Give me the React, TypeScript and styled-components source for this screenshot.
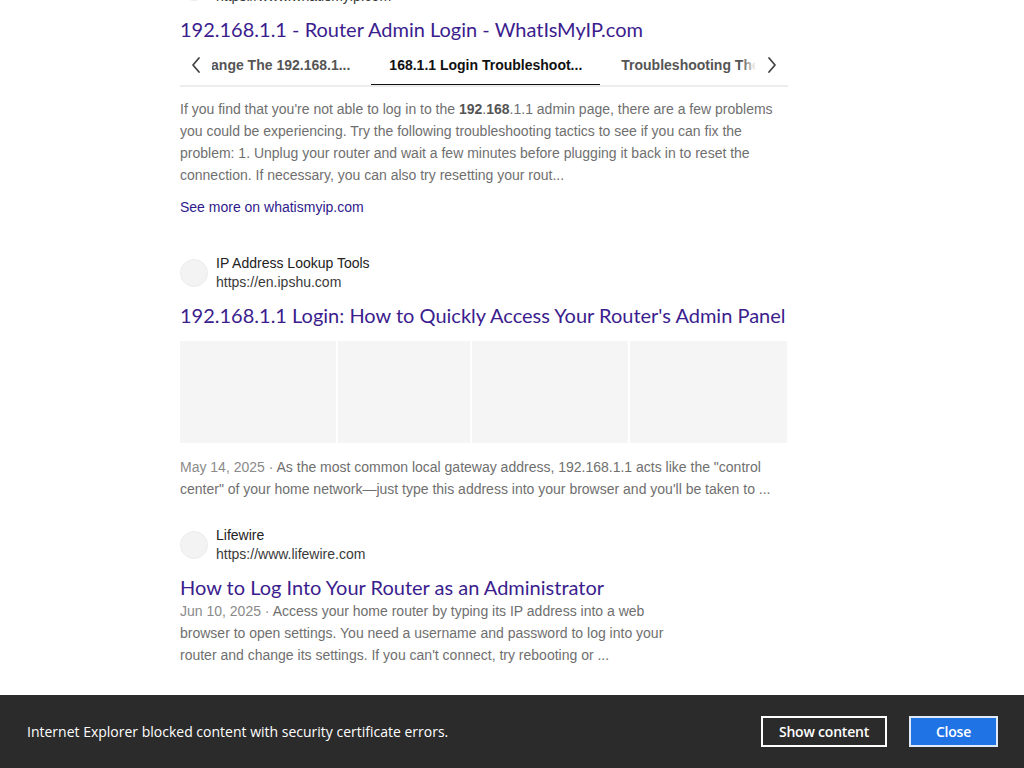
import React from 'react'
import styled, { createGlobalStyle } from 'styled-components'

const GlobalStyle = createGlobalStyle`
  html, body {
    margin: 0;
    padding: 0;
    background: #ffffff;
    overflow: hidden;
  }
  body {
    font-family: 'Liberation Sans', Arial, sans-serif;
  }
`

const Viewport = styled.div`
  width: 1024px;
  height: 768px;
  overflow: hidden;
  position: relative;
  background: #ffffff;
`

const Results = styled.main`
  width: 608px;
  margin: -32px 0 0 180px;
  display: flex;
  flex-direction: column;
`

const Result = styled.section<{ gapAfter: number }>`
  display: flex;
  flex-direction: column;
  margin-bottom: ${({ gapAfter }) => gapAfter}px;
`

const SourceRow = styled.div`
  display: flex;
  align-items: center;
  gap: 8px;
  height: 38px;
`

const Avatar = styled.div`
  width: 26px;
  height: 26px;
  border-radius: 50%;
  background: #f3f3f3;
  border: 1px solid #ececec;
  flex: none;
`

const SourceText = styled.div`
  display: flex;
  flex-direction: column;
  font-size: 14px;
  line-height: 19px;
`

const SourceName = styled.span`
  color: #222222;
`

const SourceUrl = styled.span`
  color: #3a3a3a;
`

const Title = styled.a<{ gapBelow: number }>`
  display: block;
  margin-top: 10px;
  margin-bottom: ${({ gapBelow }) => gapBelow}px;
  font-family: 'Lato', 'Open Sans', sans-serif;
  font-size: 20px;
  line-height: 26px;
  color: #3b1d8e;
  text-decoration: none;
  white-space: nowrap;
`

const Snippet = styled.p<{ narrow?: boolean }>`
  margin: 0;
  font-size: 14px;
  line-height: 22px;
  color: #6f6f6f;
  max-width: ${({ narrow }) => (narrow ? '500px' : '608px')};

  b {
    color: #555555;
  }
`

const DateText = styled.span`
  color: #8a8a8a;
`

const SeeMore = styled.a`
  display: block;
  margin-top: 10px;
  font-size: 14px;
  line-height: 22px;
  color: #2e1a8c;
  text-decoration: none;
`

const TabBar = styled.div`
  display: flex;
  align-items: stretch;
  height: 41px;
  border-bottom: 2px solid #ececec;
  margin-bottom: 11px;
`

const ChevronButton = styled.button`
  width: 32px;
  flex: none;
  background: transparent;
  border: 0;
  padding: 0;
  display: flex;
  align-items: center;
  justify-content: center;
  color: #444444;
`

const TabViewport = styled.div`
  flex: 1;
  overflow: hidden;
  position: relative;
  display: flex;
`

const TabTrack = styled.div`
  display: flex;
  gap: 3px;
  margin-left: -91px;
  flex: none;
`

const Tab = styled.div<{ active?: boolean }>`
  display: flex;
  align-items: center;
  padding: 2px 18px 0;
  font-size: 14px;
  font-weight: bold;
  white-space: nowrap;
  color: ${({ active }) => (active ? '#111111' : '#555555')};
  border-bottom: 3px solid ${({ active }) => (active ? '#111111' : 'transparent')};
  margin-bottom: -2px;
`

const Fade = styled.div`
  position: absolute;
  right: 0;
  top: 0;
  bottom: 0;
  width: 14px;
  background: linear-gradient(to right, rgba(255, 255, 255, 0), #ffffff);
`

const ImageStrip = styled.div`
  display: grid;
  grid-template-columns: 156px 132px 156px 157px;
  gap: 2px;
  height: 102px;
  margin-bottom: 13px;
`

const ImageTile = styled.div`
  background: #f5f5f5;
`

const NoticeBar = styled.div`
  position: absolute;
  left: 0;
  right: 0;
  bottom: 0;
  height: 73px;
  background: #2b2b2b;
  display: flex;
  align-items: center;
  padding: 0 26px 0 27px;
  gap: 22px;
  font-family: 'Open Sans', 'Noto Sans', sans-serif;
`

const NoticeText = styled.span`
  flex: 1;
  color: #ffffff;
  font-size: 14px;
`

const NoticeButton = styled.button<{ primary?: boolean }>`
  height: 31px;
  width: ${({ primary }) => (primary ? '89px' : '126px')};
  border: 2px solid ${({ primary }) => (primary ? '#dfe9f8' : '#ffffff')};
  background: ${({ primary }) => (primary ? '#1f73e4' : '#2b2b2b')};
  color: #ffffff;
  font-family: 'Open Sans', 'Noto Sans', sans-serif;
  font-size: 14px;
  font-weight: 600;
  letter-spacing: -0.2px;
  padding: 0;
`

function Chevron({ dir }: { dir: 'left' | 'right' }) {
  return (
    <svg width="12" height="18" viewBox="0 0 12 18" fill="none">
      <path
        d={dir === 'left' ? 'M9 2 L3 9 L9 16' : 'M3 2 L9 9 L3 16'}
        stroke="#444"
        strokeWidth="1.8"
        strokeLinecap="round"
        strokeLinejoin="round"
      />
    </svg>
  )
}

export default function App() {
  return (
    <Viewport>
      <GlobalStyle />
      <Results>
        <Result gapAfter={36}>
          <SourceRow>
            <Avatar />
            <SourceText>
              <SourceName>WhatIsMyIP.com</SourceName>
              <SourceUrl>https://www.whatismyip.com</SourceUrl>
            </SourceText>
          </SourceRow>
          <Title gapBelow={2}>192.168.1.1 - Router Admin Login - WhatIsMyIP.com</Title>
          <TabBar>
            <ChevronButton>
              <Chevron dir="left" />
            </ChevronButton>
            <TabViewport>
              <TabTrack>
                <Tab>How To Change The 192.168.1...</Tab>
                <Tab active>168.1.1 Login Troubleshoot...</Tab>
                <Tab>Troubleshooting The 192.168.1.1...</Tab>
              </TabTrack>
              <Fade />
            </TabViewport>
            <ChevronButton>
              <Chevron dir="right" />
            </ChevronButton>
          </TabBar>
          <Snippet>
            If you find that you're not able to log in to the <b>192</b>.<b>168</b>.1.1 admin page, there are a few problems
            you could be experiencing. Try the following troubleshooting tactics to see if you can fix the problem: 1.
            Unplug your router and wait a few minutes before plugging it back in to reset the connection. If necessary,
            you can also try resetting your rout...
          </Snippet>
          <SeeMore>See more on whatismyip.com</SeeMore>
        </Result>

        <Result gapAfter={26}>
          <SourceRow>
            <Avatar />
            <SourceText>
              <SourceName>IP Address Lookup Tools</SourceName>
              <SourceUrl>https://en.ipshu.com</SourceUrl>
            </SourceText>
          </SourceRow>
          <Title gapBelow={13}>192.168.1.1 Login: How to Quickly Access Your Router's Admin Panel</Title>
          <ImageStrip>
            <ImageTile />
            <ImageTile />
            <ImageTile />
            <ImageTile />
          </ImageStrip>
          <Snippet>
            <DateText>May 14, 2025 · </DateText>
            As the most common local gateway address, 192.168.1.1 acts like the "control center" of your home
            network—just type this address into your browser and you'll be taken to ...
          </Snippet>
        </Result>

        <Result gapAfter={0}>
          <SourceRow>
            <Avatar />
            <SourceText>
              <SourceName>Lifewire</SourceName>
              <SourceUrl>https://www.lifewire.com</SourceUrl>
            </SourceText>
          </SourceRow>
          <Title gapBelow={0}>How to Log Into Your Router as an Administrator</Title>
          <Snippet narrow>
            <DateText>Jun 10, 2025 · </DateText>
            Access your home router by typing its IP address into a web browser to open settings. You need a username
            and password to log into your router and change its settings. If you can't connect, try rebooting or ...
          </Snippet>
        </Result>
      </Results>

      <NoticeBar>
        <NoticeText>Internet Explorer blocked content with security certificate errors.</NoticeText>
        <NoticeButton>Show content</NoticeButton>
        <NoticeButton primary>Close</NoticeButton>
      </NoticeBar>
    </Viewport>
  )
}
